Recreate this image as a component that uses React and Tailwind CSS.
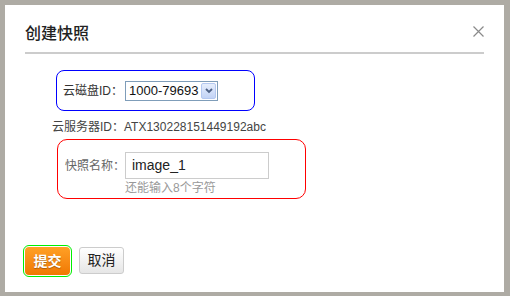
import React from 'react';

const cjk = { fontFamily: '"Liberation Sans", "Noto Sans CJK SC", sans-serif' };

const App = () => {
  return (
    <div className="w-[510px] h-[296px] bg-[#aeaba4] pt-[5px] pl-[5px] overflow-hidden" style={cjk}>
      <div className="w-[499px] h-[287px] bg-white flex flex-col">
        {/* Header */}
        <div className="mx-[20px] h-[49px] pt-[18px] border-b-2 border-[#cccccc] flex justify-between">
          <h2 className="text-[16px] leading-[22px] font-medium text-[#222]">创建快照</h2>
          <svg width="11" height="11" viewBox="0 0 11 11" className="mt-[3px]">
            <path d="M0.5 0.5 L10.5 10.5 M10.5 0.5 L0.5 10.5" stroke="#8a8a8a" strokeWidth="1.2" />
          </svg>
        </div>

        {/* Body */}
        <div className="flex flex-col items-start">
          <div className="ml-[51px] mt-[16px] w-[199px] h-[41px] border border-[#0000ff] rounded-[8px] flex items-center pl-[6px]">
            <span className="w-[62px] text-[12px] text-[#333]">云磁盘ID：</span>
            <div className="w-[93px] h-[20px] border border-[#7f9db9] bg-white flex items-center">
              <span className="pl-[3px] text-[13px] leading-none text-[#111]">1000-79693</span>
              <div className="ml-auto mr-[1px] w-[15px] h-[16px] rounded-[2px] border border-[#b4c8f0] bg-gradient-to-b from-[#e6eefc] to-[#c2d3f6] flex items-center justify-center">
                <svg width="8" height="6" viewBox="0 0 8 6">
                  <path d="M1 1 L4 4 L7 1" fill="none" stroke="#4d6185" strokeWidth="1.8" />
                </svg>
              </div>
            </div>
          </div>

          <div className="ml-[47px] mt-[7px] text-[12px] leading-[18px] text-[#444]">
            云服务器ID：ATX130228151449192abc
          </div>

          <div className="ml-[52px] mt-[3px] w-[249px] h-[60px] border border-[#ff0000] rounded-[10px] flex items-start pl-[7px] pt-[12px]">
            <span className="w-[60px] h-[27px] flex items-center text-[12px] text-[#666]">快照名称：</span>
            <div className="flex flex-col">
              <div className="w-[144px] h-[27px] border border-[#cccccc] flex items-center pl-[6px] text-[14px] text-[#222]">
                image_1
              </div>
              <span className="mt-[2px] text-[12px] leading-[14px] text-[#999]">还能输入8个字符</span>
            </div>
          </div>

          {/* Buttons */}
          <div className="ml-[20px] mt-[48px] flex items-start gap-[9px]">
            <button className="w-[45px] h-[28px] rounded-[4px] bg-gradient-to-b from-[#ffa024] to-[#f07800] text-white text-[14px] font-bold outline outline-1 outline-offset-1 outline-[#00ee00] [text-shadow:0_1px_1px_rgba(0,0,0,0.3)]">
              提交
            </button>
            <button className="w-[45px] h-[27px] rounded-[3px] border border-[#cccccc] bg-gradient-to-b from-white to-[#e6e6e6] text-[#222] text-[14px]">
              取消
            </button>
          </div>
        </div>
      </div>
    </div>
  );
};

export default App;
